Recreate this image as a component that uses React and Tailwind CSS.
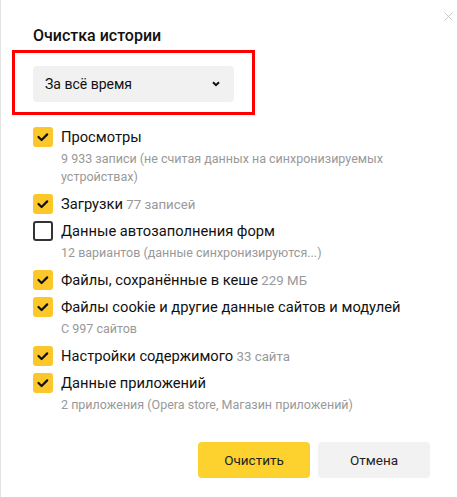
import React from "react";

const Check = ({ checked }) =>
  checked ? (
    <div className="w-5 h-5 shrink-0 rounded-[3px] bg-[#fcc72a] flex items-center justify-center">
      <svg width="20" height="20" viewBox="0 0 20 20">
        <path d="M5.5 10 L8.6 13 L14.2 7.4" fill="none" stroke="#111" strokeWidth="2.2" strokeLinecap="round" strokeLinejoin="round" />
      </svg>
    </div>
  ) : (
    <div className="w-5 h-5 shrink-0 rounded-[3px] border-2 border-[#333]" />
  );

const Item = ({ checked, label, extra, sub }) => (
  <div className="mt-[7px] first:mt-0">
    <div className="flex items-center h-5">
      <Check checked={checked} />
      <div className="ml-2 text-[14.7px] leading-5 text-[#111] whitespace-nowrap">
        {label}
        {extra && <span className="text-[#999] text-[13.3px]"> {extra}</span>}
      </div>
    </div>
    {sub && (
      <div className="ml-7 mt-[3px] pb-[1px] text-[12.5px] leading-[18px] text-[#999]">{sub}</div>
    )}
  </div>
);

export default function App() {
  return (
    <div
      className="relative w-[457px] h-[497px] bg-white border-l border-[#e4e4e4] overflow-hidden"
      style={{ fontFamily: "'Segoe UI', Roboto, 'Noto Sans', sans-serif" }}
    >
      <svg className="absolute left-[443px] top-[12px]" width="9" height="9" viewBox="0 0 9 9">
        <path d="M0.5 0.5 L8.5 8.5 M8.5 0.5 L0.5 8.5" stroke="#c8c8c8" strokeWidth="1" />
      </svg>
      <div className="pl-[32px] pt-[26px]">
        <div className="text-[16px] leading-5 font-medium text-[#111]">Очистка истории</div>
        <div className="-ml-[21px] mt-[4px] w-[243px] h-[65px] border-[3px] border-[#fe0000] pl-[18px] pt-[13px]">
          <div className="w-[201px] h-9 rounded bg-[#f1f1f1] flex items-center justify-between pl-3 pr-[14px]">
            <span className="text-[14px] text-[#111]">За всё время</span>
            <svg width="8" height="6" viewBox="0 0 8 6">
              <path d="M1 1.2 L4 4.2 L7 1.2" fill="none" stroke="#111" strokeWidth="2" />
            </svg>
          </div>
        </div>
        <div className="mt-[12px]">
          <Item checked label="Просмотры" sub={<>9 933 записи (не считая данных на синхронизируемых<br />устройствах)</>} />
          <Item checked label="Загрузки" extra="77 записей" />
          <Item label="Данные автозаполнения форм" sub="12 вариантов (данные синхронизируются...)" />
          <Item checked label="Файлы, сохранённые в кеше" extra="229 МБ" />
          <Item checked label="Файлы cookie и другие данные сайтов и модулей" sub="С 997 сайтов" />
          <Item checked label="Настройки содержимого" extra="33 сайта" />
          <Item checked label="Данные приложений" sub="2 приложения (Opera store, Магазин приложений)" />
        </div>
        <div className="mt-[27px] flex justify-end gap-2 pr-[27px]">
          <button className="w-[112px] h-9 rounded bg-[#fdd22e] text-[13.5px] text-[#222]">Очистить</button>
          <button className="w-[112px] h-9 rounded bg-[#f2f2f2] text-[13.5px] text-[#222]">Отмена</button>
        </div>
      </div>
    </div>
  );
}
